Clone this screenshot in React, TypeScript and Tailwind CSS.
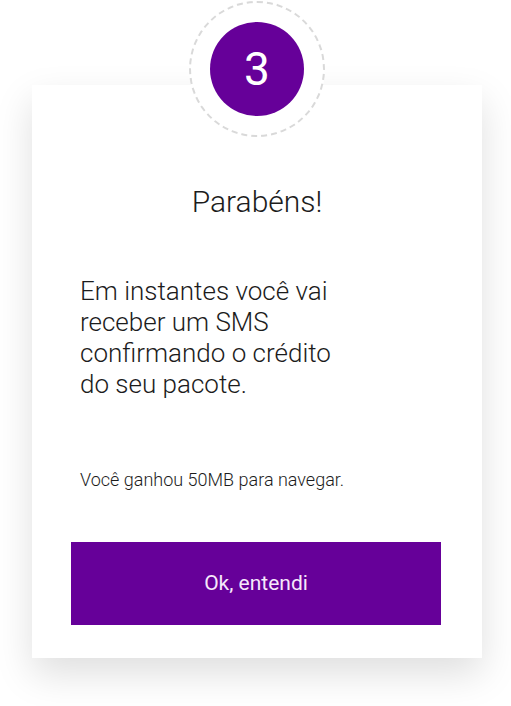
export default function App() {
  return (
    <div className="w-[511px] h-[706px] bg-white overflow-hidden pt-[85px] pl-[32px]" style={{ fontFamily: 'Roboto, "Liberation Sans", sans-serif' }}>
      <div className="relative w-[450px] h-[573px] bg-white shadow-[0_16px_36px_rgba(0,0,0,0.13)] flex flex-col">
        {/* step badge */}
        <div className="absolute left-[157px] top-[-84px] w-[136px] h-[136px] rounded-full bg-white border-2 border-dashed border-[#d9d9d9] flex items-center justify-center">
          <div className="w-[94px] h-[94px] rounded-full bg-[#660099] flex items-center justify-center text-white text-[46px] leading-none font-normal">
            3
          </div>
        </div>

        <h1 className="pt-[101px] text-center text-[30px] leading-[32px] font-light text-[#1c1c1c]">Parabéns!</h1>

        <p className="mt-[58px] px-[48px] text-[26px] leading-[31px] font-light text-[#1c1c1c]">
          Em instantes você vai
          <br />
          receber um SMS
          <br />
          confirmando o crédito
          <br />
          do seu pacote.
        </p>

        <p className="mt-[68px] px-[48px] text-[18px] leading-[24px] font-light text-[#1c1c1c]">Você ganhou 50MB para navegar.</p>

        <button className="mt-[50px] ml-[39px] w-[370px] h-[83px] bg-[#660099] text-[#f6e8fb] text-[21px] font-normal">
          Ok, entendi
        </button>
      </div>
    </div>
  );
}
